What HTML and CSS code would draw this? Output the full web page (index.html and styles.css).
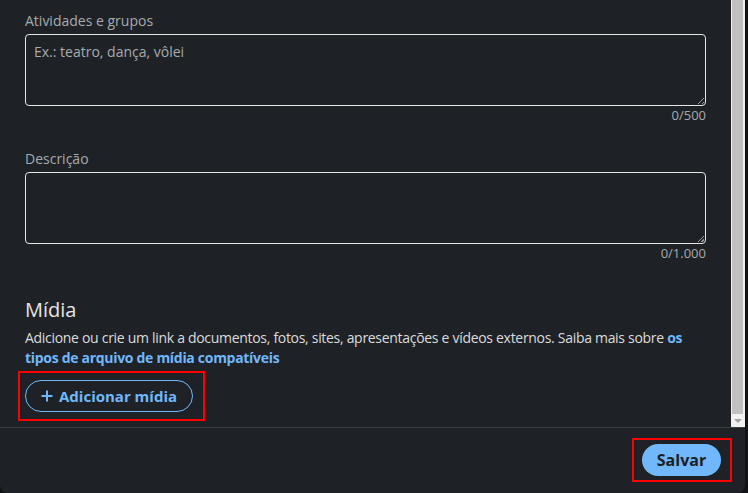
FILE: index.html
```html
<!DOCTYPE html>
<html lang="pt-BR">
<head>
<meta charset="utf-8">
<link rel="stylesheet" href="styles.css">
</head>
<body>
<div class="modal">
  <div class="scroller">
    <div class="content">
      <div class="field">
        <label class="label">Atividades e grupos</label>
        <div class="textarea"><span class="placeholder">Ex.: teatro, dança, vôlei</span><span class="grip"></span></div>
        <div class="counter">0/500</div>
      </div>
      <div class="field second">
        <label class="label">Descrição</label>
        <div class="textarea"><span class="grip"></span></div>
        <div class="counter">0/1.000</div>
      </div>
      <section class="media">
        <h2 class="media-title">Mídia</h2>
        <p class="media-text">Adicione ou crie um link a documentos, fotos, sites, apresentações e vídeos externos. Saiba mais sobre <a class="link" href="#">os</a> <a class="link" href="#">tipos de arquivo de mídia compatíveis</a></p>
        <button class="add-btn annotated-add">
          <svg class="plus" width="14" height="14" viewBox="0 0 14 14"><path d="M7 1.5v11M1.5 7h11" stroke="#71b7fb" stroke-width="2" fill="none"/></svg>
          <span>Adicionar mídia</span>
        </button>
      </section>
    </div>
    <div class="scrollbar">
      <div class="thumb"></div>
      <div class="arrow"></div>
    </div>
  </div>
  <div class="footer">
    <button class="save-btn annotated-save">Salvar</button>
  </div>
</div>
</body>
</html>
```
FILE: styles.css
```css
* { box-sizing: border-box; }
html, body { margin: 0; padding: 0; }
body {
  background: #111315;
  width: 748px;
  height: 493px;
  overflow: hidden;
  font-family: "Open Sans", "Noto Sans", sans-serif;
}
.modal {
  width: 745px;
  height: 493px;
  background: #1e2227;
  border-radius: 0 0 8px 8px;
  display: flex;
  flex-direction: column;
  overflow: hidden;
}
.scroller {
  height: 428px;
  display: flex;
  border-bottom: 1px solid #3b3f44;
}
.content {
  flex: 1;
  padding: 11px 25px 0 25px;
}
.label {
  display: block;
  font-size: 14px;
  line-height: 20px;
  color: #a8aaac;
  margin-bottom: 3px;
}
.textarea {
  position: relative;
  height: 72px;
  border: 1px solid #e6e6e6;
  border-radius: 4px;
  padding: 5px 8px;
}
.placeholder {
  font-size: 14px;
  line-height: 20px;
  color: #a8aaac;
}
.grip {
  position: absolute;
  right: 1px;
  bottom: 1px;
  width: 6px;
  height: 6px;
  background: linear-gradient(135deg, transparent 45%, #9a9a9a 45%, #9a9a9a 55%, transparent 55%, transparent 75%, #9a9a9a 75%, #9a9a9a 85%, transparent 85%);
}
.counter {
  text-align: right;
  font-size: 13px;
  line-height: 16px;
  color: #a8aaac;
  margin-top: 1px;
}
.field.second { margin-top: 26px; }
.media { margin-top: 37px; }
.media-title {
  margin: 0;
  font-size: 20px;
  line-height: 24px;
  font-weight: 400;
  color: #e6e6e6;
}
.media-text {
  margin: 6px 0 0 0;
  font-size: 14px;
  line-height: 20px;
  letter-spacing: -0.3px;
  color: #dcdcdc;
}
.link {
  color: #71b7fb;
  font-weight: 700;
  text-decoration: none;
}
.add-btn {
  margin-top: 12px;
  height: 32px;
  width: 168px;
  border: 1px solid #71b7fb;
  border-radius: 16px;
  background: transparent;
  color: #71b7fb;
  font-family: inherit;
  font-size: 15px;
  font-weight: 700;
  display: flex;
  align-items: center;
  gap: 5px;
  padding: 0 0 0 14px;
}
.plus { flex: none; }
.scrollbar {
  width: 14px;
  height: 427px;
  background: #f1f1f1;
  position: relative;
  flex: none;
}
.thumb {
  position: absolute;
  left: 1px;
  right: 2px;
  top: 0;
  height: 414px;
  background: #c1c1c1;
}
.arrow {
  position: absolute;
  left: 3px;
  top: 419px;
  width: 0;
  height: 0;
  border-left: 4px solid transparent;
  border-right: 4px solid transparent;
  border-top: 4px solid #a3a3a3;
}
.footer {
  flex: 1;
  display: flex;
  justify-content: flex-end;
  align-items: center;
  padding-right: 24px;
}
.save-btn {
  height: 32px;
  width: 79px;
  margin-top: -1px;
  border: none;
  border-radius: 16px;
  background: #71b7fb;
  color: #1b1f23;
  font-family: inherit;
  font-size: 16px;
  font-weight: 700;
}
.annotated-add, .annotated-save { position: relative; }
.annotated-add::after {
  content: "";
  position: absolute;
  left: -8px;
  right: -13px;
  top: -10px;
  bottom: -10px;
  border: 2px solid #ff0000;
}
.annotated-save::after {
  content: "";
  position: absolute;
  left: -10px;
  right: -11px;
  top: -6px;
  bottom: -6px;
  border: 2px solid #ff0000;
}
```
